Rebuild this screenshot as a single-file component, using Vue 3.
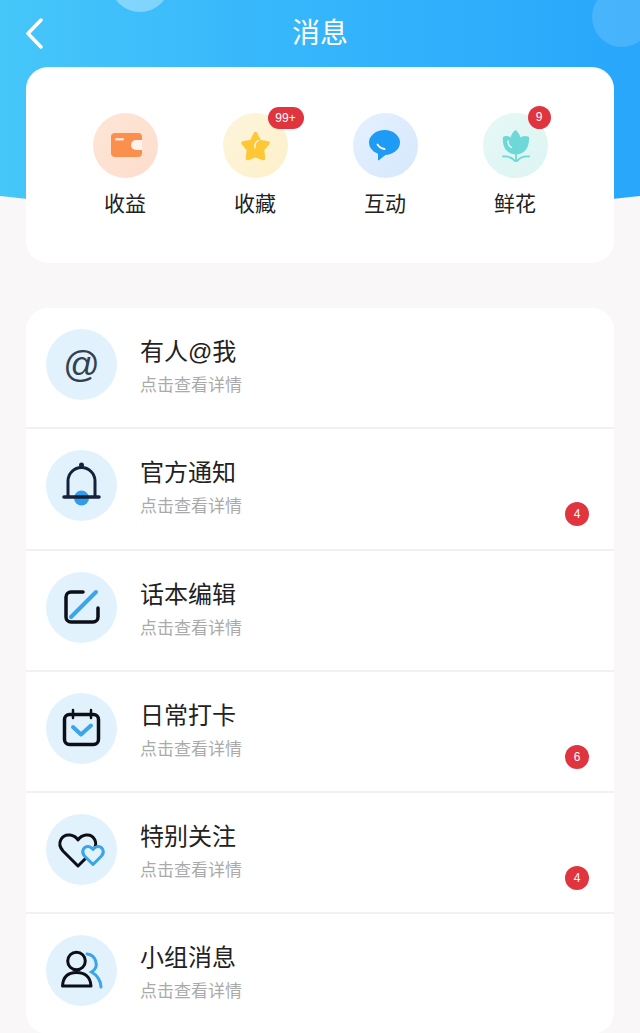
<script setup>
const shortcuts = [
  { key: 'wallet', label: '收益', badge: '' },
  { key: 'star', label: '收藏', badge: '99+' },
  { key: 'chat', label: '互动', badge: '' },
  { key: 'flower', label: '鲜花', badge: '9' },
]

const rows = [
  { key: 'at', title: '有人@我', count: '' },
  { key: 'bell', title: '官方通知', count: '4' },
  { key: 'edit', title: '话本编辑', count: '' },
  { key: 'calendar', title: '日常打卡', count: '6' },
  { key: 'hearts', title: '特别关注', count: '4' },
  { key: 'group', title: '小组消息', count: '' },
]
</script>

<template>
  <div class="page">
    <div class="hero">
      <span class="bubble bubble-left"></span>
      <span class="bubble bubble-right"></span>
    </div>

    <header class="nav">
      <svg class="back" viewBox="0 0 20 32" width="20" height="32">
        <path d="M17 3 L4 16.500 L17 30" fill="none" stroke="#fff" stroke-width="3.500" stroke-linecap="round" stroke-linejoin="round" />
      </svg>
      <h1 class="nav-title">消息</h1>
    </header>

    <section class="card shortcuts">
      <div v-for="item in shortcuts" :key="item.key" class="shortcut">
        <div class="shortcut-icon" :class="item.key">
          <svg v-if="item.key === 'wallet'" viewBox="0 0 65 65" width="65" height="65">
            <rect x="18" y="20" width="31" height="24" rx="4" fill="#fb8f4e" />
            <rect x="22" y="25" width="9" height="2.500" rx="1.200" fill="#fde0cf" />
            <path d="M49 27 H43 a5 5 0 0 0 0 10 H49 Z" fill="#fdf3ec" />
          </svg>
          <svg v-else-if="item.key === 'star'" viewBox="0 0 65 65" width="65" height="65">
            <path d="M32.500 20.500 L36.500 28.500 L45 30 L39.500 36.500 L40.500 45.500 L32.500 42.500 L24.500 45.500 L25.500 36.500 L20 30 L28.500 28.500 Z" fill="#fdc735" stroke="#fdc735" stroke-width="3.500" stroke-linejoin="round" />
            <path d="M32 35 C31.500 31 33 28.500 35.500 27.500" fill="none" stroke="#fff" stroke-width="1.200" stroke-linecap="round" />
          </svg>
          <svg v-else-if="item.key === 'chat'" viewBox="0 0 65 65" width="65" height="65">
            <ellipse cx="31.500" cy="29.500" rx="15.500" ry="12.500" fill="#1e9bf4" />
            <path d="M25.500 39 L25.500 47 L33 41 Z" fill="#1e9bf4" stroke="#1e9bf4" stroke-width="1" stroke-linejoin="round" />
            <path d="M24.500 31.500 C26 34 28.500 35.500 31.500 36" fill="none" stroke="#fff" stroke-width="1.800" stroke-linecap="round" />
          </svg>
          <svg v-else viewBox="0 0 65 65" width="65" height="65">
            <path d="M20 24 C23 22 26 23.500 27.500 24.500 C28.500 21 30.500 18.500 32.500 17 C34.500 18.500 36.500 21 37.500 24.500 C39 23.500 42 22 46 24 C46.500 33 43 41 33 41.500 C23 41 19 33 20 24 Z" fill="#6ed8d8" />
            <path d="M33 41 V48 M20 43.500 C25 43 29 44.500 32 48 M46 43.500 C41 43 37 44.500 34 48" fill="none" stroke="#6ed8d8" stroke-width="1.800" stroke-linecap="round" />
            <path d="M25 28 C25 31 26.500 33.500 28.500 34.500" fill="none" stroke="#dff7f5" stroke-width="1.500" stroke-linecap="round" />
          </svg>
          <span v-if="item.badge" class="badge" :class="{ wide: item.badge.length > 1 }">{{ item.badge }}</span>
        </div>
        <span class="shortcut-label">{{ item.label }}</span>
      </div>
    </section>

    <section class="card list">
      <div v-for="row in rows" :key="row.key" class="row">
        <div class="row-icon">
          <span v-if="row.key === 'at'" class="at">@</span>
          <svg v-else-if="row.key === 'bell'" viewBox="0 0 71 71" width="71" height="71">
            <circle cx="35.500" cy="48" r="7.500" fill="#2f9cec" />
            <path d="M22 46 V31 a13.500 13.500 0 0 1 27 0 V46" fill="none" stroke="#16213a" stroke-width="3" />
            <circle cx="35.500" cy="15" r="2.500" fill="#16213a" />
            <path d="M18 47 H53" stroke="#16213a" stroke-width="3.500" stroke-linecap="round" />
          </svg>
          <svg v-else-if="row.key === 'edit'" viewBox="0 0 71 71" width="71" height="71">
            <path d="M37 20 H25 a5 5 0 0 0 -5 5 V45 a5 5 0 0 0 5 5 H47 a5 5 0 0 0 5 -5 V36" fill="none" stroke="#0c0f18" stroke-width="3.500" stroke-linecap="round" />
            <path d="M25 45 L50 20" stroke="#3aa5e8" stroke-width="4" stroke-linecap="round" />
          </svg>
          <svg v-else-if="row.key === 'calendar'" viewBox="0 0 71 71" width="71" height="71">
            <rect x="18.500" y="21.500" width="34" height="30" rx="5" fill="none" stroke="#0c0f18" stroke-width="3.500" />
            <path d="M27 17 V25 M45 17 V25" stroke="#0c0f18" stroke-width="2.500" stroke-linecap="round" />
            <path d="M27 34 L35 41.500 L45 32.500" fill="none" stroke="#3aa5e8" stroke-width="4" stroke-linecap="round" stroke-linejoin="round" />
          </svg>
          <svg v-else-if="row.key === 'hearts'" viewBox="0 0 71 71" width="71" height="71">
            <path d="M32 52 L17 37 C10 29 16 20 24 21 C27.500 21.500 30.500 23.500 32 26 C33.500 23.500 36.500 21.500 40 21 C48 20 53 29 47 37 Z" fill="none" stroke="#0c0f18" stroke-width="3" stroke-linejoin="round" />
            <path d="M47 50.500 L38.500 42 C34.500 37.500 38 32 42.500 32.500 C44.500 32.800 46 34 47 35.500 C48 34 49.500 32.800 51.500 32.500 C56 32 59.500 37.500 55.500 42 Z" fill="#e1f2fd" stroke="#3aa5e8" stroke-width="3" stroke-linejoin="round" />
          </svg>
          <svg v-else viewBox="0 0 71 71" width="71" height="71">
            <circle cx="30.500" cy="26" r="8.800" fill="none" stroke="#0c0f18" stroke-width="3" />
            <path d="M16.500 51 C17 42 22 37.500 30.500 37.500 C39 37.500 44.500 42 45 51 Z" fill="none" stroke="#0c0f18" stroke-width="3" stroke-linejoin="round" />
            <path d="M41 19 C50 20 54 32 45.500 37 C51 40 55 46 55 52" fill="none" stroke="#3aa5e8" stroke-width="3" stroke-linecap="round" />
          </svg>
        </div>
        <div class="row-text">
          <div class="row-title">{{ row.title }}</div>
          <div class="row-sub">点击查看详情</div>
        </div>
        <span v-if="row.count" class="row-count">{{ row.count }}</span>
      </div>
    </section>
  </div>
</template>

<style>
body {
  background: #faf7f8;
}
</style>

<style scoped>
.page {
  position: relative;
  width: 640px;
  height: 1033px;
  overflow: hidden;
  background: #faf7f8;
  font-family: "Liberation Sans", "Noto Sans CJK SC", sans-serif;
}

.hero {
  position: absolute;
  top: 0;
  left: -40px;
  width: 720px;
  height: 208px;
  overflow: hidden;
  border-radius: 0 0 50% 50% / 0 0 22px 22px;
  background: linear-gradient(90deg, #48c9f9 0%, #38b8fb 40%, #26a5fb 100%);
}

.bubble {
  position: absolute;
  border-radius: 50%;
}

.bubble-left {
  left: 150px;
  top: -48px;
  width: 60px;
  height: 60px;
  background: rgba(255, 255, 255, 0.35);
}

.bubble-right {
  left: 632px;
  top: -13px;
  width: 60px;
  height: 60px;
  background: rgba(255, 255, 255, 0.14);
}

.nav {
  position: relative;
  height: 67px;
  display: flex;
  align-items: center;
  justify-content: center;
}

.back {
  position: absolute;
  left: 24px;
  top: 17px;
}

.nav-title {
  margin: 0;
  font-size: 28px;
  font-weight: 400;
  line-height: 40px;
  color: #fff;
}

.card {
  position: relative;
  margin: 0 26px;
  background: #fff;
  border-radius: 22px;
}

.shortcuts {
  height: 196px;
  display: flex;
  justify-content: center;
  padding-top: 46px;
  box-sizing: border-box;
}

.shortcut {
  width: 130px;
  display: flex;
  flex-direction: column;
  align-items: center;
}

.shortcut-icon {
  position: relative;
  width: 65px;
  height: 65px;
  border-radius: 50%;
}

.shortcut-icon svg {
  display: block;
}

.wallet {
  background: linear-gradient(135deg, #fde6d6, #fdddcd);
}

.star {
  background: linear-gradient(135deg, #fdf4dc, #fdf1c9);
}

.chat {
  background: linear-gradient(135deg, #e4f1fd, #d6e8fe);
}

.flower {
  background: linear-gradient(135deg, #e6f8f5, #dcf5f3);
}

.badge {
  position: absolute;
  left: 45px;
  top: -7px;
  width: 23px;
  height: 23px;
  border-radius: 12px;
  background: #e0353f;
  color: #fff;
  font-size: 12px;
  line-height: 23px;
  text-align: center;
}

.badge.wide {
  width: 36px;
  top: -6px;
  height: 22px;
  line-height: 22px;
}

.shortcut-label {
  margin-top: 13px;
  font-size: 21px;
  line-height: 26px;
  color: #222;
}

.list {
  margin-top: 45px;
  height: 726px;
  overflow: hidden;
}

.row {
  position: relative;
  height: 121.300px;
  box-sizing: border-box;
  display: flex;
  align-items: flex-start;
  padding: 21px 20px 0;
  gap: 23px;
  border-bottom: 2px solid #f1f1f1;
}

.row:last-child {
  border-bottom: none;
}

.row-icon {
  flex: none;
  width: 71px;
  height: 71px;
  border-radius: 50%;
  background: #e1f2fd;
  display: flex;
  align-items: center;
  justify-content: center;
}

.row-icon svg {
  display: block;
}

.at {
  font-size: 36px;
  line-height: 40px;
  color: #33404f;
}

.row-text {
  margin-top: 7px;
}

.row-title {
  font-size: 24px;
  line-height: 32px;
  color: #222;
}

.row-sub {
  margin-top: 6px;
  font-size: 17px;
  line-height: 24px;
  color: #aaa;
}

.row-count {
  position: absolute;
  left: 539px;
  top: 73px;
  width: 24px;
  height: 24px;
  border-radius: 50%;
  background: #e0353f;
  color: #fff;
  font-size: 12px;
  line-height: 24px;
  text-align: center;
}
</style>
